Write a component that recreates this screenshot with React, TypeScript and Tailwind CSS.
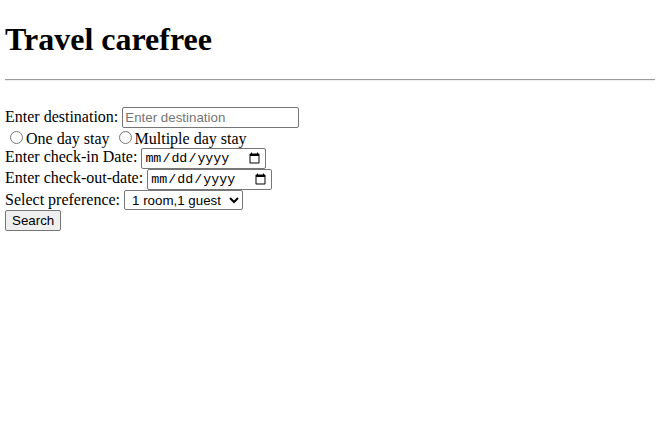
export default function App() {
  const ctl = "rounded-[2px] border border-[#767676] font-['Liberation_Sans',Arial,sans-serif] text-[13.33px] text-black align-baseline"
  const dateCtl = "h-[21px] rounded-[2px] border border-[#767676] px-[2px] font-['Liberation_Mono','Courier_New',monospace] text-[13.33px] text-black align-baseline"

  return (
    <div className="min-h-screen bg-white pl-[5px] pr-[8px] font-['Liberation_Serif','Times_New_Roman',serif] text-[16px] leading-[normal] text-black">
      <h1 className="pt-[21px] text-[32px] font-bold leading-[37px]">Travel carefree</h1>
      <hr className="mt-[21px] h-0 border-t border-b border-t-[#9a9a9a] border-b-[#eeeeee]" />

      <form className="mt-[26px]" onSubmit={e => e.preventDefault()}>
        {/* destination */}
        <div>
          Enter destination:{' '}
          <input
            type="text"
            placeholder="Enter destination"
            className={`${ctl} h-[21px] w-[177px] px-[2px] placeholder:text-[#757575]`}
          />
        </div>

        {/* stay type */}
        <div>
          <input type="radio" name="stay" className="ml-[5px] mr-[3px] mt-[3px] align-baseline" />
          One day stay{' '}
          <input type="radio" name="stay" className="ml-[5px] mr-[3px] mt-[3px] align-baseline" />
          Multiple day stay
        </div>

        <div>
          Enter check-in Date: <input type="date" className={`${dateCtl} w-[125px]`} />
        </div>
        <div>
          Enter check-out-date: <input type="date" className={`${dateCtl} w-[125px]`} />
        </div>

        <div>
          Select preference:{' '}
          <select className={`${ctl} h-[20px] w-[119px] bg-white pl-[3px]`}>
            <option>1 room,1 guest</option>
            <option>1 room,2 guests</option>
            <option>2 rooms,4 guests</option>
          </select>
        </div>

        <button type="submit" className={`${ctl} h-[21px] bg-[#efefef] px-[6px]`}>
          Search
        </button>
      </form>
    </div>
  )
}
